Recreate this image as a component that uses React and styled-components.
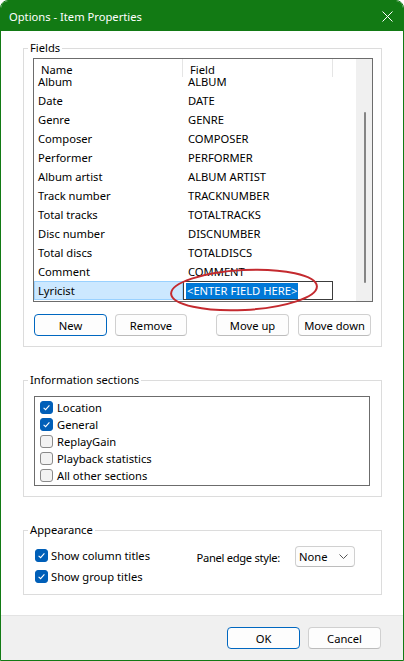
import React from "react";
import styled, { createGlobalStyle } from "styled-components";

const GlobalStyle = createGlobalStyle`
  html, body {
    margin: 0;
    padding: 0;
    background: #ffffff;
  }
  body {
    font-family: "Noto Sans", "Open Sans", sans-serif;
    font-size: 11.2px;
    color: #000;
  }
  * {
    box-sizing: border-box;
  }
`;

const Frame = styled.div`
  width: 404px;
  height: 661px;
  display: flex;
  flex-direction: column;
  border: 1px solid #127a14;
  border-radius: 8px 8px 0 0;
  overflow: hidden;
  background: #fff;
`;

const TitleBar = styled.div`
  height: 30px;
  flex: none;
  display: flex;
  align-items: center;
  justify-content: space-between;
  padding: 0 6px 0 8px;
  background: #127a14;
  color: #fff;
  font-size: 11.2px;
`;

const CloseButton = styled.div`
  width: 20px;
  height: 20px;
  display: flex;
  align-items: center;
  justify-content: center;
`;

const Body = styled.div`
  flex: 1;
  display: flex;
  flex-direction: column;
  padding: 9px 21px 0 22px;
`;

const Group = styled.fieldset`
  margin: ${(p) => p.$top || 0}px 0 0 0;
  padding: 0;
  border: 1px solid #dcdcdc;
  min-width: 0;
`;

const Legend = styled.legend`
  margin-left: 4px;
  padding: 0 2px;
  line-height: 16px;
`;

const GroupInner = styled.div`
  padding: ${(p) => p.$pad};
`;

/* ---- Fields list ---- */

const ListBox = styled.div`
  position: relative;
  height: 244px;
  border: 1px solid #6c6c6c;
  display: flex;
`;

const ListMain = styled.div`
  flex: 1;
  display: flex;
  flex-direction: column;
  min-width: 0;
`;

const HeaderRow = styled.div`
  height: 18px;
  flex: none;
  display: flex;
  background: #fff;
  position: relative;
  z-index: 1;
`;

const HeaderCell = styled.div`
  width: ${(p) => p.$w}px;
  padding: 3px 0 0 7px;
  line-height: 15px;
  border-right: 1px solid ${(p) => (p.$last ? "transparent" : "#e5e5e5")};
`;

const RowsViewport = styled.div`
  flex: 1;
  overflow: hidden;
`;

const Rows = styled.div`
  display: flex;
  flex-direction: column;
`;

const Row = styled.div`
  height: 19px;
  display: flex;
  align-items: center;
`;

const NameCell = styled.div`
  width: 149px;
  height: 19px;
  background: ${(p) => (p.$selected ? "#cce8ff" : "transparent")};
  border: 1px solid ${(p) => (p.$selected ? "#99d1ff" : "transparent")};
  padding-left: 3px;
  line-height: 18px;
`;

const FieldCell = styled.div`
  width: 150px;
  padding-left: 5px;
  line-height: 20px;
`;

const EditBox = styled.div`
  width: 150px;
  height: 19px;
  border: 1px solid #3c3c3c;
  background: #fff;
  padding: 1px 0 0 2px;
  display: flex;
`;

const SelectedText = styled.span`
  background: #0078d7;
  color: #fff;
  line-height: 15px;
  padding: 0 1px;
`;

const ScrollTrack = styled.div`
  width: 16px;
  flex: none;
  background: #f0f0f0;
  display: flex;
  justify-content: center;
  padding-top: 53px;
`;

const ScrollThumb = styled.div`
  width: 2px;
  height: 171px;
  margin-left: 1px;
  background: #858585;
  border-radius: 1px;
`;

const Annotation = styled.svg`
  position: absolute;
  left: 138px;
  top: 208px;
  overflow: visible;
  pointer-events: none;
`;

const ButtonRow = styled.div`
  display: flex;
  justify-content: space-between;
  margin-top: 12px;
  padding: 0 2px 0 1px;
`;

const ButtonGroup = styled.div`
  display: flex;
  gap: ${(p) => p.$gap}px;
`;

const Button = styled.button`
  width: ${(p) => p.$w || 72}px;
  height: 22px;
  padding: 0;
  font-family: inherit;
  font-size: 11.2px;
  color: #000;
  background: #fdfdfd;
  border: 1px solid ${(p) => (p.$default ? "#0067c0" : "#d0d0d0")};
  border-bottom-color: ${(p) => (p.$default ? "#0067c0" : "#bcbcbc")};
  border-radius: 4px;
`;

/* ---- Checklists ---- */

const CheckList = styled.div`
  height: 90px;
  border: 1px solid #6c6c6c;
  padding: 2px 0 0 5px;
  display: flex;
  flex-direction: column;
`;

const CheckRow = styled.label`
  height: ${(p) => p.$h || 17}px;
  display: flex;
  align-items: center;
  gap: ${(p) => p.$gap || 4}px;
`;

const Box = styled.span`
  width: 13px;
  height: 13px;
  flex: none;
  border-radius: 3px;
  display: flex;
  align-items: center;
  justify-content: center;
  background: ${(p) => (p.$checked ? "#005fb8" : "#f3f3f3")};
  border: 1px solid ${(p) => (p.$checked ? "#005fb8" : "#8a8a8a")};
`;

function Check({ checked, label, h, gap }) {
  return (
    <CheckRow $h={h} $gap={gap}>
      <Box $checked={checked}>
        {checked && (
          <svg width="9" height="9" viewBox="0 0 9 9">
            <path d="M1.6 4.8 L3.6 6.6 L7.4 2.4" fill="none" stroke="#fff" strokeWidth="1.1" />
          </svg>
        )}
      </Box>
      <span>{label}</span>
    </CheckRow>
  );
}

/* ---- Appearance ---- */

const AppearanceRow = styled.div`
  display: flex;
  justify-content: space-between;
  padding: 7px 26px 7px 11px;
`;

const CheckColumn = styled.div`
  display: flex;
  flex-direction: column;
`;

const EdgeStyle = styled.div`
  display: flex;
  align-items: center;
  gap: 15px;
  height: 21px;
  margin-top: 1px;
`;

const EdgeLabel = styled.span`
  letter-spacing: -0.3px;
  padding-top: 2px;
`;

const Select = styled.div`
  width: 60px;
  height: 21px;
  border: 1px solid #d0d0d0;
  border-bottom-color: #bcbcbc;
  border-radius: 4px;
  background: #fdfdfd;
  display: flex;
  align-items: center;
  justify-content: space-between;
  padding: 0 6px 0 3px;
`;

/* ---- Footer ---- */

const Footer = styled.div`
  height: 45px;
  flex: none;
  background: #f0f0f0;
  border-top: 1px solid #e3e3e3;
  display: flex;
  justify-content: flex-end;
  gap: 8px;
  padding: 11px 22px 0 0;
`;

const fields = [
  ["Album", "ALBUM"],
  ["Date", "DATE"],
  ["Genre", "GENRE"],
  ["Composer", "COMPOSER"],
  ["Performer", "PERFORMER"],
  ["Album artist", "ALBUM ARTIST"],
  ["Track number", "TRACKNUMBER"],
  ["Total tracks", "TOTALTRACKS"],
  ["Disc number", "DISCNUMBER"],
  ["Total discs", "TOTALDISCS"],
  ["Comment", "COMMENT"],
];

const sections = [
  ["Location", true],
  ["General", true],
  ["ReplayGain", false],
  ["Playback statistics", false],
  ["All other sections", false],
];

// list is scrolled to the bottom, first row partly under the header
const scrollOffset = 5;

export default function App() {
  return (
    <>
      <GlobalStyle />
      <Frame>
        <TitleBar>
          <span>Options - Item Properties</span>
          <CloseButton>
            <svg width="11" height="11" viewBox="0 0 11 11">
              <path d="M0.5 0.5 L10.5 10.5 M10.5 0.5 L0.5 10.5" stroke="#fff" strokeWidth="1" />
            </svg>
          </CloseButton>
        </TitleBar>

        <Body>
          <Group>
            <Legend>Fields</Legend>
            <GroupInner $pad="2px 8px 10px 9px">
              <ListBox>
                <ListMain>
                  <HeaderRow>
                    <HeaderCell $w={149}>Name</HeaderCell>
                    <HeaderCell $w={150}>Field</HeaderCell>
                    <HeaderCell $w={22} $last />
                  </HeaderRow>
                  <RowsViewport>
                    <Rows style={{ marginTop: -scrollOffset }}>
                      {fields.map(([name, field]) => (
                        <Row key={name}>
                          <NameCell>{name}</NameCell>
                          <FieldCell>{field}</FieldCell>
                        </Row>
                      ))}
                      <Row>
                        <NameCell $selected>Lyricist</NameCell>
                        <EditBox>
                          <SelectedText>&lt;ENTER FIELD HERE&gt;</SelectedText>
                        </EditBox>
                      </Row>
                    </Rows>
                  </RowsViewport>
                </ListMain>
                <ScrollTrack>
                  <ScrollThumb />
                </ScrollTrack>
                <Annotation width="150" height="48">
                  <ellipse
                    cx="72"
                    cy="23"
                    rx="73"
                    ry="20"
                    fill="none"
                    stroke="#c42a2f"
                    strokeWidth="2"
                    transform="rotate(-3 72 23)"
                  />
                </Annotation>
              </ListBox>
              <ButtonRow>
                <ButtonGroup $gap={8}>
                  <Button $default $w={73}>New</Button>
                  <Button>Remove</Button>
                </ButtonGroup>
                <ButtonGroup $gap={9}>
                  <Button $w={73}>Move up</Button>
                  <Button $w={73}>Move down</Button>
                </ButtonGroup>
              </ButtonRow>
            </GroupInner>
          </Group>

          <Group $top={25}>
            <Legend>Information sections</Legend>
            <GroupInner $pad="8px 11px 10px 10px">
              <CheckList>
                {sections.map(([label, on]) => (
                  <Check key={label} label={label} checked={on} />
                ))}
              </CheckList>
            </GroupInner>
          </Group>

          <Group $top={25}>
            <Legend>Appearance</Legend>
            <AppearanceRow>
              <CheckColumn>
                <Check label="Show column titles" checked h={21} gap={3} />
                <Check label="Show group titles" checked h={21} gap={3} />
              </CheckColumn>
              <EdgeStyle>
                <EdgeLabel>Panel edge style:</EdgeLabel>
                <Select>
                  <span>None</span>
                  <svg width="9" height="5" viewBox="0 0 9 5">
                    <path d="M0.5 0.5 L4.5 4.5 L8.5 0.5" fill="none" stroke="#555" strokeWidth="1" />
                  </svg>
                </Select>
              </EdgeStyle>
            </AppearanceRow>
          </Group>
        </Body>

        <Footer>
          <Button $default $w={73}>OK</Button>
          <Button $w={73}>Cancel</Button>
        </Footer>
      </Frame>
    </>
  );
}
